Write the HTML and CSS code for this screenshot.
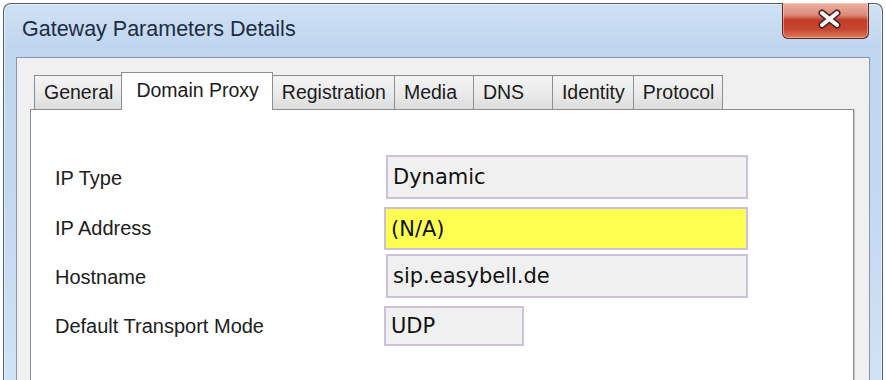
FILE: index.html
```html
<!DOCTYPE html>
<html lang="en">
<head>
    <meta charset="UTF-8">
    <title>Gateway Parameters Details</title>
    <link rel="stylesheet" href="styles.css">
</head>
<body>
    <div class="window">
        <div class="titlebar">
            <span class="title">Gateway Parameters Details</span>
            <div class="close">
                <svg width="84" height="33" viewBox="0 0 84 33">
                    <path d="M39 10 L54 22 M54 10 L39 22" stroke="#4a2320" stroke-width="7" stroke-linecap="round" fill="none"/>
                    <path d="M39 10 L54 22 M54 10 L39 22" stroke="#ffffff" stroke-width="4" stroke-linecap="round" fill="none"/>
                </svg>
            </div>
        </div>
        <div class="client">
            <div class="tabs">
                <div class="tab">General</div>
                <div class="tab active">Domain Proxy</div>
                <div class="tab">Registration</div>
                <div class="tab">Media</div>
                <div class="tab">DNS</div>
                <div class="tab">Identity</div>
                <div class="tab">Protocol</div>
            </div>
            <div class="panel">
                <div class="form">
                    <div class="label">IP Type</div>
                    <div class="field">Dynamic</div>
                    <div class="label">IP Address</div>
                    <div class="field warn">(N/A)</div>
                    <div class="label">Hostname</div>
                    <div class="field">sip.easybell.de</div>
                    <div class="label">Default Transport Mode</div>
                    <div class="field short">UDP</div>
                </div>
            </div>
        </div>
    </div>
</body>
</html>
```
FILE: styles.css
```css
body{
    margin: 0;
    height: 380px;
    overflow: hidden;
    background-color: #ffffff;
    font-family: "Liberation Sans", Arial, sans-serif;
}
.window{
    margin: 3px 0 0 3px;
    width: 878px;
    height: 420px;
    border: solid 1px #4f5e72;
    border-bottom: none;
    border-radius: 8px 8px 0 0;
    background: linear-gradient(180deg, #d0e1f4 0px, #bfd6ef 45px, #c3d9f1 200px, #d3e5f7 100%);
    box-shadow: inset 0 0 0 1px rgba(255,255,255,0.55);
}
.titlebar{
    display: flex;
    justify-content: space-between;
    align-items: flex-start;
    height: 53px;
}
.title{
    margin: 13px 0 0 18px;
    font-size: 21.5px;
    line-height: 24px;
    color: #1d2c42;
}
.close{
    box-sizing: border-box;
    width: 87px;
    height: 36px;
    margin: -1px 13px 0 0;
    border: solid 1px #5e2620;
    border-top: none;
    border-radius: 0 0 6px 6px;
    background: linear-gradient(180deg, #eab2a4 0px, #dc8b78 12px, #c43d28 17px, #c84530 26px, #dc7a5c 100%);
    box-shadow: inset 0 0 0 1px rgba(255,220,210,0.5);
}
.close svg{
    display: block;
}
.client{
    margin: 0 12px;
    height: 400px;
    background-color: #f0f0f0;
    border: solid 1px #8696ab;
}
.tabs{
    display: flex;
    align-items: flex-end;
    margin: 14px 0 0 17px;
}
.tab{
    box-sizing: border-box;
    min-width: 80px;
    height: 34px;
    margin-left: -1px;
    padding: 0 8px 0 9px;
    line-height: 33px;
    font-size: 19.5px;
    color: #1b1b1b;
    border: solid 1px #8b8e94;
    border-bottom: none;
    background: linear-gradient(180deg, #f4f4f4 0%, #ebebeb 50%, #dcdcdc 100%);
}
.tab:first-child{
    margin-left: 0;
}
.tab.active{
    position: relative;
    z-index: 1;
    height: 38px;
    margin-bottom: -1px;
    padding: 0 13px 0 14px;
    line-height: 34px;
    background: #ffffff;
}
.panel{
    margin: 0 15px 0 13px;
    height: 300px;
    padding: 45px 0 0 24px;
    background-color: #ffffff;
    border: solid 1px #8b8e94;
    box-shadow: 1px 0 0 #c8c8c8;
}
.form{
    display: grid;
    grid-template-columns: 331px auto;
    row-gap: 6px;
    justify-items: start;
    align-items: center;
}
.label{
    padding-top: 3px;
    font-size: 20px;
    color: #202020;
}
.field{
    box-sizing: border-box;
    width: 362px;
    height: 44px;
    padding-left: 5px;
    line-height: 41px;
    font-family: "DejaVu Sans", sans-serif;
    font-size: 21px;
    color: #111111;
    background-color: #f0f0f0;
    border: solid 2px #cbc1dc;
}
.field.warn{
    width: 364px;
    height: 43px;
    margin: 2px 0 -2px -2px;
    line-height: 40px;
    background-color: #ffff52;
}
.field.short{
    width: 140px;
    height: 40px;
    margin: 2px 0 0 -2px;
    line-height: 37px;
}
```
